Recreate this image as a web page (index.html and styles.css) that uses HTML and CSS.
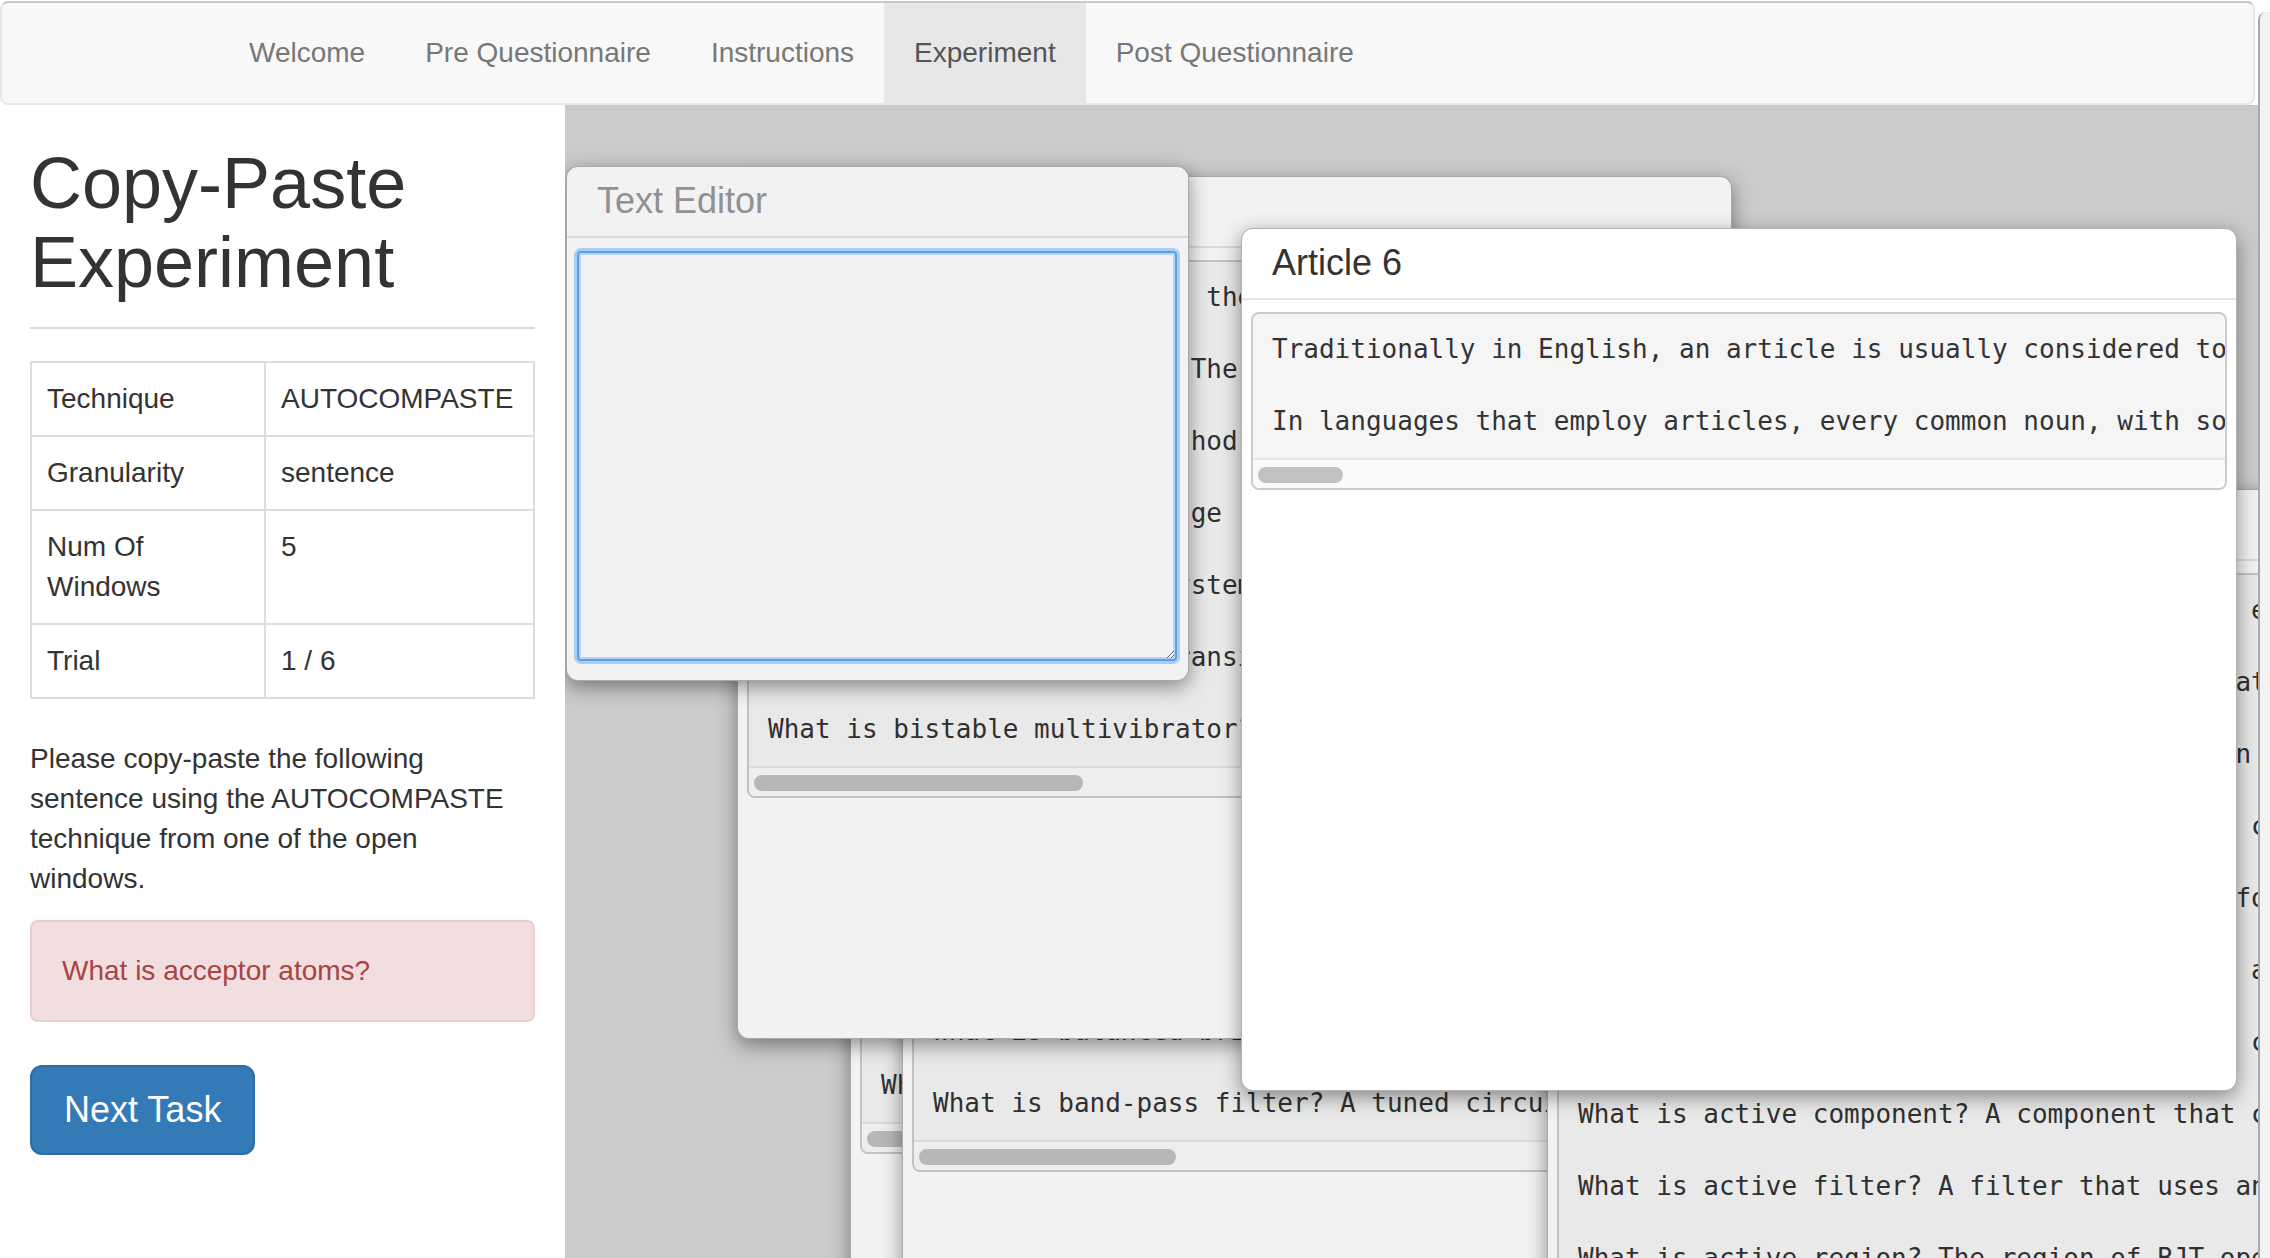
FILE: index.html
```html
<!DOCTYPE html>
<html lang="en">
<head>
<meta charset="utf-8">
<title>Copy-Paste Experiment</title>
<link rel="stylesheet" href="styles.css">
</head>
<body>
<div class="screen">
  <div class="app">
    <nav class="navbar">
      <ul class="nav">
        <li><a>Welcome</a></li>
        <li><a>Pre Questionnaire</a></li>
        <li><a>Instructions</a></li>
        <li class="active"><a>Experiment</a></li>
        <li><a>Post Questionnaire</a></li>
      </ul>
    </nav>
    <div class="main">
      <aside class="sidebar">
        <h1>Copy-Paste Experiment</h1>
        <hr>
        <table class="info">
          <colgroup><col class="info-key"><col></colgroup>
          <tr><td>Technique</td><td>AUTOCOMPASTE</td></tr>
          <tr><td>Granularity</td><td>sentence</td></tr>
          <tr><td>Num Of Windows</td><td>5</td></tr>
          <tr><td>Trial</td><td>1 / 6</td></tr>
        </table>
        <p class="lead">Please copy-paste the following sentence using the AUTOCOMPASTE technique from one of the open windows.</p>
        <div class="alert">What is acceptor atoms?</div>
        <button class="btn">Next Task</button>
      </aside>

      <section class="desktop">
        <div class="win win-idle win-c">
          <div class="win-head"><h3 class="win-title">Article 3</h3></div>
          <div class="win-body">
            <div class="doc">
<pre class="doc-text">What is balun? A transformer that converts a balanced line to an unbalanced one.

What is band? A range of frequencies between two defined limits.

What is bandwidth? The range of frequencies a circuit can pass without loss.

What is barrier potential? The voltage across the depletion layer of a junction.

What is base? The thin middle region of a bipolar junction transistor.

What is battery? Two or more cells connected to supply a higher voltage.

What is baud? A unit of signalling speed equal to one symbol per second.

What is beat frequency? The difference between two mixed frequencies.</pre>
              <div class="scroll"><div class="thumb" style="width:300px"></div></div>
            </div>
          </div>
        </div>

        <div class="win win-idle win-d">
          <div class="win-head"><h3 class="win-title">Article 4</h3></div>
          <div class="win-body">
            <div class="doc">
<pre class="doc-text">What is attenuation? A reduction in the strength of a signal.

What is attenuator? A network that reduces the amplitude of a signal.

What is audio frequency? A frequency within the range of human hearing.

What is avalanche breakdown? A rapid increase of current in a reverse-biased diode.

What is average value? The mean of all instantaneous values over a half cycle.

What is back emf? A voltage induced in a coil that opposes the change of current.

What is balanced bridge? A bridge circuit in which the detector reads zero.

What is band-pass filter? A tuned circuit that passes a band of frequencies.</pre>
              <div class="scroll"><div class="thumb" style="width:257px"></div></div>
            </div>
          </div>
        </div>

        <div class="win win-idle win-e">
          <div class="win-head"><h3 class="win-title">Article 2</h3></div>
          <div class="win-body">
            <div class="doc">
<pre class="doc-text">What is absolute zero? The point where the energy of molecules is at its minimum.

What is AC? Alternating current, a flow that reverses direction periodically.

What is acceptor atoms? Atoms that can gain an electron from the valence band.

What is accumulator? A device which stores chemical energy as electrical charge.

What is AC signal? A time-varying signal, for example a sine wave.

What is AC generator? A machine that makes an AC voltage from rotation.

What is accuracy? The degree to which it's correct or close to the true value.

What is active component? A component that can control current, such as a transistor.

What is active filter? A filter that uses an active device such as an op-amp.

What is active region? The region of BJT operation where it acts as an amplifier.</pre>
              <div class="scroll"><div class="thumb" style="width:240px"></div></div>
            </div>
          </div>
        </div>

        <div class="win win-idle win-b">
          <div class="win-head"><h3 class="win-title">Article 5</h3></div>
          <div class="win-body">
            <div class="doc">
<pre class="doc-text">What is bias? The amount of the DC voltage applied to a device to set its operating point.

What is biasing resistors? The resistors used to set the operating point of a transistor.

What is binary codes? A method of representing data using only two symbols, 0 and 1.

What is bipolar? A DC voltage (either polarity) with respect to a common point.

What is binary? A number system with base 2, using only the digits 0 and 1.

What is biasing? Setting transistor operating conditions using DC voltages.

What is bistable multivibrator? A circuit with two stable states, also known as a flip-flop.</pre>
              <div class="scroll"><div class="thumb" style="width:329px"></div></div>
            </div>
          </div>
        </div>

        <div class="win win-idle win-editor">
          <div class="win-head"><h3 class="win-title win-title-muted">Text Editor</h3></div>
          <div class="win-body editor-body">
            <textarea class="editor"></textarea>
          </div>
        </div>

        <div class="win win-article">
          <div class="win-head"><h3 class="win-title">Article 6</h3></div>
          <div class="win-body">
            <div class="doc">
<pre class="doc-text">Traditionally in English, an article is usually considered to be a type of adjective. In some languages, articles are a special part of speech.

In languages that employ articles, every common noun, with some exceptions, is expressed with a certain definiteness.</pre>
              <div class="scroll"><div class="thumb" style="width:85px"></div></div>
            </div>
          </div>
        </div>
      </section>
    </div>
  </div>
  <div class="edge"></div>
</div>
</body>
</html>
```

FILE: styles.css
```css
* { box-sizing: border-box; }

html, body {
  margin: 0;
  padding: 0;
}

body {
  width: 2270px;
  height: 1258px;
  overflow: hidden;
  background: #fff;
  color: #333;
  font-family: "Liberation Sans", Arial, sans-serif;
}

.screen {
  display: flex;
  height: 1258px;
}

.app {
  width: 2258px;
  flex: none;
  display: flex;
  flex-direction: column;
}

/* ---------- navbar ---------- */
.navbar {
  flex: none;
  height: 104px;
  margin: 1px 3px 0 0;
  padding-left: 217px;
  background: #f8f8f8;
  border: 2px solid #e7e7e7;
  border-top-color: #c9c9c9;
  border-radius: 8px;
}

.nav {
  display: flex;
  margin: 0;
  padding: 0;
  list-style: none;
}

.nav a {
  display: block;
  padding: 30px;
  font-size: 28px;
  line-height: 40px;
  color: #777;
}

.nav .active a {
  background: #e7e7e7;
  color: #555;
}

/* ---------- main ---------- */
.main {
  flex: 1;
  display: flex;
  min-height: 0;
}

.sidebar {
  width: 565px;
  flex: none;
  padding: 39px 30px 0;
  background: #fff;
}

.sidebar h1 {
  margin: 0;
  font-size: 72px;
  line-height: 79px;
  font-weight: 400;
  color: #333;
}

.sidebar hr {
  margin: 25px 0 32px;
  border: 0;
  border-top: 2px solid #d9d9d9;
}

.info {
  width: 100%;
  table-layout: fixed;
  border-collapse: collapse;
  margin-bottom: 40px;
  font-size: 28px;
  line-height: 40px;
}

.info-key { width: 234px; }

.info td {
  padding: 16px 16px 16px 15px;
  border: 2px solid #ddd;
  vertical-align: top;
}

.lead {
  margin: 0 0 21px;
  font-size: 28px;
  line-height: 40px;
}

.alert {
  margin-bottom: 43px;
  padding: 29px 30px;
  background: #f2dede;
  border: 2px solid #ebccd1;
  border-radius: 8px;
  color: #a94442;
  font-size: 28px;
  line-height: 40px;
}

.btn {
  display: inline-block;
  padding: 19px 32px;
  font-family: inherit;
  font-size: 36px;
  line-height: 48px;
  color: #fff;
  background: #337ab7;
  border: 2px solid #2e6da4;
  border-radius: 12px;
}

/* ---------- desktop & windows ---------- */
.desktop {
  flex: 1;
  position: relative;
  overflow: hidden;
  background: #cbcbcb;
}

.win {
  position: absolute;
  display: flex;
  flex-direction: column;
  overflow: hidden;
  background: #fff;
  border: 1px solid rgba(0, 0, 0, 0.3);
  border-radius: 12px;
  box-shadow: 0 6px 20px rgba(0, 0, 0, 0.42);
}

.win-head {
  flex: none;
  padding: 14px 30px 15px;
  border-bottom: 2px solid #e5e5e5;
}

.win-title {
  margin: 0;
  font-size: 36px;
  line-height: 40px;
  font-weight: 400;
  color: #333;
  white-space: nowrap;
}

.win-body {
  padding: 12px 9px 10px;
}

.doc {
  overflow: hidden;
  background: #f5f5f5;
  border: 2px solid #ccc;
  border-radius: 8px;
}

.doc-text {
  margin: 0;
  padding: 17px 19px 19px;
  overflow: hidden;
  white-space: pre;
  font-family: "DejaVu Sans Mono", "Liberation Mono", monospace;
  font-size: 26px;
  line-height: 36px;
  color: #333;
}

.scroll {
  height: 30px;
  padding: 7px 5px 0;
  background: #fafafa;
  border-top: 2px solid #e6e6e6;
}

.thumb {
  height: 16px;
  border-radius: 8px;
  background: #c1c1c1;
}

/* inactive windows are dimmed */
.win-idle { background: #f2f2f2; }
.win-idle .win-head { border-bottom-color: #dadada; }
.win-idle .win-title { color: #303030; }
.win-idle .doc { background: #e9e9e9; border-color: #c2c2c2; }
.win-idle .doc-text { color: #303030; }
.win-idle .scroll { background: #eeeeee; border-top-color: #dbdbdb; }
.win-idle .thumb { background: #b7b7b7; }

.win-title-muted, .win-idle .win-title-muted { color: #919191; }

.win-c      { left: 285px; top: 355px; width: 995px; height: 900px; z-index: 1; }
.win-d      { left: 337px; top: 373px; width: 995px; height: 900px; z-index: 2; }
.win-e      { left: 982px; top: 384px; width: 995px; height: 900px; z-index: 3; }
.win-b      { left: 172px; top: 71px;  width: 995px; height: 863px; z-index: 4; }
.win-editor { left: 1px;   top: 61px;  width: 623px; height: 515px; z-index: 5; }
.win-article{ left: 676px; top: 123px; width: 996px; height: 863px; z-index: 6; }

.editor-body {
  padding: 13px 10px 0;
}

.editor {
  display: block;
  width: 600px;
  height: 410px;
  margin: 0;
  padding: 12px;
  background: #f2f2f2;
  border: 2px solid #5e9ee6;
  border-radius: 4px;
  outline: none;
  box-shadow: 0 0 0 3px #aacdf3, inset 0 0 0 2px #b5d4f5;
  resize: both;
}

/* ---------- right screen edge ---------- */
.edge {
  width: 12px;
  flex: none;
  margin-top: 12px;
  background: #f3f3f3;
  border-left: 2px solid #a9a9a9;
  border-top-left-radius: 8px;
}
```
